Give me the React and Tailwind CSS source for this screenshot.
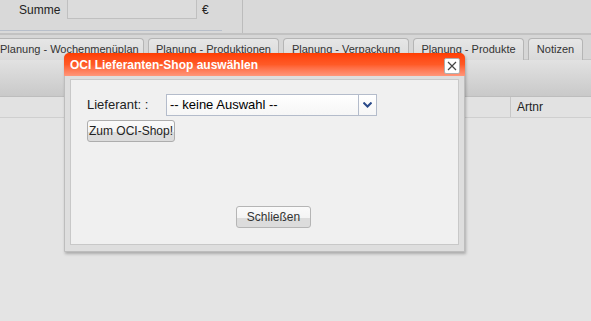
import React from "react";

const tabs = [
  { label: "Planung - Wochenmenüplan", w: "w-[144px]" },
  { label: "Planung - Produktionen", w: "w-[131px]" },
  { label: "Planung - Verpackung", w: "w-[126px]" },
  { label: "Planung - Produkte", w: "w-[111px]" },
  { label: "Notizen", w: "w-[55px]" },
];

function Dialog() {
  return (
    <div className="absolute left-[64px] top-[53px] w-[401px] h-[199px] rounded-t-[5px] border border-[#bdbdbd] bg-[#dedede] shadow-[1px_2px_3px_rgba(0,0,0,0.25)] flex flex-col">
      <div className="h-[23px] -mx-px -mt-px rounded-t-[5px] bg-gradient-to-b from-[#ff3d00] via-[#ff5a26] to-[#ff967a] flex items-center justify-between pl-[6px] pr-[5px]">
        <span className="text-white font-bold text-[12px]">OCI Lieferanten-Shop auswählen</span>
        <button type="button" className="w-[16px] h-[16px] mt-[2px] bg-white border border-[#b0b0b0] rounded-[2px] flex items-center justify-center">
          <svg width="10" height="10" viewBox="0 0 10 10">
            <path d="M1 1 L9 9 M9 1 L1 9" stroke="#444" strokeWidth="1.2" fill="none" />
          </svg>
        </button>
      </div>
      <div className="flex-1 px-[5px] pt-[3px] pb-[6px]">
        <div className="h-full border border-[#c8c8c8] bg-[#f0f0f0] pl-[16px] pt-[14px] flex flex-col">
          <div className="flex items-center">
            <span className="w-[79px] text-[13px] text-[#222]">Lieferant: :</span>
            <div className="w-[211px] h-[22px] border border-[#b4bccb] bg-gradient-to-b from-white to-[#f6f6f6] flex">
              <span className="flex-1 pl-[3px] text-[13px] leading-[20px] text-black">-- keine Auswahl --</span>
              <div className="w-[18px] border-l border-[#b4bccb] flex items-center justify-center">
                <svg width="9" height="6" viewBox="0 0 9 6">
                  <path d="M0.5 0.5 L4.5 4.5 L8.5 0.5" stroke="#2a4a8a" strokeWidth="2" fill="none" />
                </svg>
              </div>
            </div>
          </div>
          <button type="button" className="mt-[4px] self-start w-[88px] h-[22px] rounded-[3px] border border-[#adadad] bg-[linear-gradient(#fafafa_0%,#f4f4f4_55%,#dcdcdc_56%,#dcdcdc_100%)] text-[12px] text-[#222]">
            Zum OCI-Shop!
          </button>
          <button type="button" className="mt-[64px] ml-[149px] self-start w-[75px] h-[22px] rounded-[3px] border border-[#b5b5b5] bg-[linear-gradient(#fafafa_0%,#f4f4f4_55%,#dcdcdc_56%,#dcdcdc_100%)] text-[12px] text-[#333]">
            Schließen
          </button>
        </div>
      </div>
    </div>
  );
}

export default function App() {
  return (
    <div className="relative w-[591px] h-[321px] overflow-hidden bg-[#e4e4e4] font-['Liberation_Sans',Arial,sans-serif]">
      <div className="h-[33px] bg-[#d9d9d9] flex">
        <div className="w-[243px] border-r border-[#bcbcbc] flex flex-col">
          <div className="h-[20px] flex items-center">
            <span className="ml-[19px] w-[48px] text-[12px] text-[#222]">Summe</span>
            <div className="w-[130px] h-[20px] -mt-[2px] border border-[#c0c0c0] border-t-0 bg-[#dcdcdc]" />
            <span className="ml-[5px] text-[12px] text-[#222]">€</span>
          </div>
          <div className="mt-[10px] w-[222px] border-b border-[#b8bfca]" />
        </div>
      </div>
      <div className="h-[2px] bg-[#c2c2c2]" />
      <div className="h-[3px] bg-[#d6d6d6]" />
      <div className="h-[22px] bg-[#d6d6d6] flex gap-[4px] border-b border-[#c4c4c4]">
        {tabs.map((t) => (
          <div
            key={t.label}
            className={`${t.w} shrink-0 whitespace-nowrap h-[22px] rounded-t-[4px] border border-b-0 border-[#b5b5b5] bg-gradient-to-b from-[#e6e6e6] to-[#dadada] text-[11px] text-[#333] flex items-center justify-center first:rounded-tl-none first:border-l-0 first:justify-start`}
          >
            {t.label}
          </div>
        ))}
      </div>
      <div className="h-[37px] bg-gradient-to-b from-[#e2e2e2] to-[#c9c9c9] border-b border-[#bdbdbd]" />
      <div className="h-[21px] bg-[#e2e2e2] border-b border-[#cfcfcf] flex">
        <div className="w-[511px] border-r border-[#c6c6c6]" />
        <span className="pl-[6px] text-[12px] leading-[20px] text-[#222]">Artnr</span>
      </div>
      <Dialog />
    </div>
  );
}
